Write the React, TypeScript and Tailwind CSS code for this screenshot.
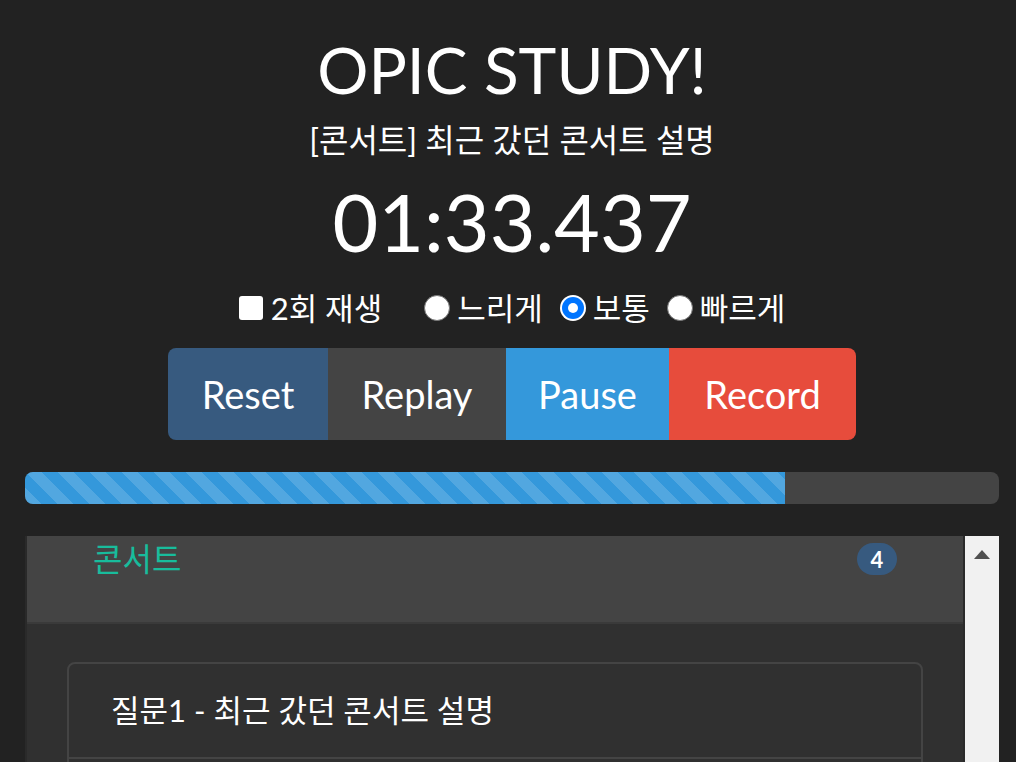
const LATO = "font-['Lato','Noto_Sans_CJK_KR',sans-serif]";

const stripes = {
  backgroundImage:
    'linear-gradient(45deg, rgba(255,255,255,.15) 25%, transparent 25%, transparent 50%, rgba(255,255,255,.15) 50%, rgba(255,255,255,.15) 75%, transparent 75%, transparent)',
  backgroundSize: '32px 32px',
};

function Radio({ checked, label }: { checked?: boolean; label: string }) {
  return (
    <label className="flex items-center gap-[7px]">
      {checked ? (
        <span className="flex h-[26px] w-[26px] items-center justify-center rounded-full bg-white">
          <span className="flex h-[22px] w-[22px] items-center justify-center rounded-full bg-[#0075ff]">
            <span className="h-[10px] w-[10px] rounded-full bg-white" />
          </span>
        </span>
      ) : (
        <span className="h-[26px] w-[26px] rounded-full border border-[#767676] bg-white" />
      )}
      <span>{label}</span>
    </label>
  );
}

export default function App() {
  const progress = 78;
  return (
    <div className={`h-screen overflow-hidden bg-[#222222] text-white ${LATO}`}>
      <div className="ml-[25px] flex w-[974px] flex-col items-center">
        <h1 className="mt-[30px] text-[64px] leading-[80px]">OPIC STUDY!</h1>
        <p className="mt-[10px] text-[32px] leading-[40px]">[콘서트] 최근 갔던 콘서트 설명</p>
        <div className="mt-[14px] text-[79px] leading-[96px]">01:33.437</div>

        <div className="mt-[18px] flex items-center text-[31px] leading-[40px]">
          <label className="flex items-center gap-[8px]">
            <span className="h-[24px] w-[24px] rounded-[3px] bg-white" />
            <span>2회 재생</span>
          </label>
          <div className="ml-[42px] flex items-center gap-[17px]">
            <Radio label="느리게" />
            <Radio label="보통" checked />
            <Radio label="빠르게" />
          </div>
        </div>

        <div className="mt-[20px] flex h-[92px] overflow-hidden rounded-[8px] text-[38px]">
          <button className="w-[160px] bg-[#375a7f]">Reset</button>
          <button className="w-[178px] bg-[#444444]">Replay</button>
          <button className="w-[163px] bg-[#3498db]">Pause</button>
          <button className="w-[187px] bg-[#e74c3c]">Record</button>
        </div>
      </div>

      <div className="ml-[25px] mt-[32px] h-[32px] w-[974px] overflow-hidden rounded-[8px] bg-[#444444]">
        <div className="h-full bg-[#3498db]" style={{ width: `${progress}%`, ...stripes }} />
      </div>

      <div className="ml-[25px] mt-[32px] flex h-[240px] w-[974px]">
        <div className="flex-1 border-x-2 border-[#2a2a2a] bg-[#303030]">
          <div className="flex h-[88px] items-start justify-between border-b-2 border-[#3a3a3a] bg-[#444444] pl-[66px] pr-[66px]">
            <span className="text-[32px] leading-[46px] text-[#18bc9c]">콘서트</span>
            <span className="mt-[7px] flex h-[32px] w-[40px] items-center justify-center rounded-full bg-[#375a7f] text-[22px] font-bold">
              4
            </span>
          </div>
          <div className="px-[40px] pt-[38px]">
            <div className="rounded-[8px] border-2 border-[#444444]">
              <div className="flex h-[95px] items-center border-b-2 border-[#444444] pl-[42px] text-[31px]">
                질문1 - 최근 갔던 콘서트 설명
              </div>
              <div className="h-[60px]" />
            </div>
          </div>
        </div>
        <div className="flex w-[34px] justify-center bg-[#f1f1f1] pt-[14px]">
          <svg width="16" height="9" viewBox="0 0 16 9">
            <path d="M8 0 L16 9 L0 9 Z" fill="#505050" />
          </svg>
        </div>
      </div>
    </div>
  );
}
